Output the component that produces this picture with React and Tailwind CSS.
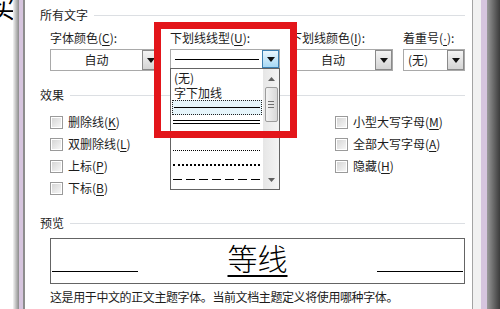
import React from "react";

const font = "font-['Noto_Sans_CJK_SC','Noto_Sans',sans-serif]";

function Arrow({ active }) {
  return (
    <div
      className={
        "flex w-[17px] items-center justify-center self-stretch border " +
        (active
          ? "border-[#3c7fb1] bg-gradient-to-b from-[#eaf6fd] to-[#a7d9f5]"
          : "border-[#8a8a8a] bg-gradient-to-b from-[#f4f4f4] to-[#d4d4d4]")
      }
    >
      <svg width="8" height="5" viewBox="0 0 8 5">
        <path d="M0 0H8L4 5Z" fill="#111" />
      </svg>
    </div>
  );
}

function Select({ children, center }) {
  return (
    <div className="flex h-[22px] border border-[#a9a9a9] bg-white">
      <div
        className={
          "flex flex-1 items-center text-[12px] " +
          (center ? "justify-center" : "pl-[4px]")
        }
      >
        {children}
      </div>
      <Arrow />
    </div>
  );
}

function Heading({ children }) {
  return (
    <div className="flex h-[16px] items-center">
      <span className="text-[12px] leading-none">{children}</span>
      <div className="ml-[6px] h-px flex-1 bg-[#dcdfe3]" />
    </div>
  );
}

function Check({ children }) {
  return (
    <div className="flex h-[22px] items-center">
      <div className="h-[13px] w-[13px] border border-[#9a9a9a] p-px">
        <div className="h-full w-full bg-gradient-to-br from-[#d6d6d6] to-[#f6f6f6]" />
      </div>
      <span className="ml-[5px] text-[12px]">{children}</span>
    </div>
  );
}

function Key({ k }) {
  return <span className="underline underline-offset-2">{k}</span>;
}

function LineItem({ kind }) {
  if (kind === "solid") return <div className="h-px w-full bg-black" />;
  if (kind === "double")
    return (
      <div className="w-full">
        <div className="h-px bg-black" />
        <div className="mt-[2px] h-px bg-black" />
      </div>
    );
  if (kind === "thick") return <div className="h-[2px] w-full bg-black" />;
  if (kind === "dotted") return <div className="w-full border-t border-dotted border-black" />;
  if (kind === "heavy") return <div className="w-full border-t-2 border-dotted border-black" />;
  return (
    <div className="h-px w-full bg-[repeating-linear-gradient(90deg,#000_0_9px,transparent_9px_13px)]" />
  );
}

function Dropdown() {
  const lines = ["double", "thick", "dotted", "heavy", "dashed"];
  return (
    <div className="absolute left-0 top-[19px] flex h-[122px] w-[110px] border border-[#646464] bg-white">
      <div className="flex-1 pt-[2px] text-[12px] leading-[14px]">
        <div className="flex h-[14.5px] items-center pl-[3px]">(无)</div>
        <div className="flex h-[14.5px] items-center pl-[3px]">字下加线</div>
        <div className="mx-px flex h-[14.5px] items-center border border-dotted border-[#222] bg-[#e6f5fb] px-[1px]">
          <LineItem kind="solid" />
        </div>
        {lines.map((k) => (
          <div key={k} className="flex h-[14.5px] items-center pl-[2px] pr-[3px]">
            <LineItem kind={k} />
          </div>
        ))}
      </div>
      <div className="flex w-[16px] flex-col items-center bg-gradient-to-r from-[#e6e6e6] to-[#f4f4f4]">
        <svg className="mt-[8px]" width="7" height="4" viewBox="0 0 7 4">
          <path d="M0 4L3.5 0L7 4Z" fill="#606060" />
        </svg>
        <div className="mt-[6px] flex h-[35px] w-[13px] flex-col items-center justify-center gap-[2px] rounded-[2px] border border-[#9c9c9c] bg-gradient-to-r from-[#f3f3f3] to-[#d8d8d8]">
          <div className="h-px w-[6px] bg-[#707070]" />
          <div className="h-px w-[6px] bg-[#707070]" />
          <div className="h-px w-[6px] bg-[#707070]" />
        </div>
        <svg className="mt-[56px]" width="7" height="4" viewBox="0 0 7 4">
          <path d="M0 0H7L3.5 4Z" fill="#606060" />
        </svg>
      </div>
    </div>
  );
}

export default function App() {
  return (
    <div className={"flex h-[309px] w-[500px] overflow-hidden bg-white text-[#1c1c1c] " + font}>
      <div className="w-[13px] overflow-hidden">
        <div className="-ml-[10px] -mt-[5px] text-[25px] leading-none text-black">买</div>
      </div>
      <div className="w-[6px] bg-gradient-to-r from-[#f4f4f4] to-[#8c8c8c]" />
      <div className="w-[4px] bg-[#d6c5de]" />
      <div className="w-[2px] bg-[#8d8d8d]" />

      <div className="relative flex-1 pl-[15px] pr-[7px] pt-[7px]">
        <Heading>所有文字</Heading>

        <div className="ml-[10px] mt-[7px] grid grid-cols-[110px_110px_103px_62px] gap-x-[10px]">
          <div className="h-[16px] text-[12px] leading-[16px]">
            字体颜色(<Key k="C" />):
          </div>
          <div className="h-[16px] text-[12px] leading-[16px]">
            下划线线型(<Key k="U" />):
          </div>
          <div className="h-[16px] text-[12px] leading-[16px]">
            下划线颜色(<Key k="I" />):
          </div>
          <div className="h-[16px] text-[12px] leading-[16px]">
            着重号(
            <span className="font-['Liberation_Sans',sans-serif] underline underline-offset-2">·</span>
            ):
          </div>

          <div className="mt-[3px]">
            <Select center>自动</Select>
          </div>
          <div className="relative mt-[3px]">
            <div className="flex h-[20px] border border-[#a9a9a9] bg-white">
              <div className="flex flex-1 items-center pl-[4px] pr-[3px]">
                <div className="h-px w-full bg-black" />
              </div>
              <Arrow active />
            </div>
            <Dropdown />
          </div>
          <div className="mt-[3px]">
            <Select center>自动</Select>
          </div>
          <div className="mt-[3px]">
            <Select>(无)</Select>
          </div>
        </div>

        <div className="mt-[16px]">
          <Heading>效果</Heading>
        </div>
        <div className="ml-[10px] mt-[8px] flex">
          <div className="w-[285px]">
            <Check>
              删除线(<Key k="K" />)
            </Check>
            <Check>
              双删除线(<Key k="L" />)
            </Check>
            <Check>
              上标(<Key k="P" />)
            </Check>
            <Check>
              下标(<Key k="B" />)
            </Check>
          </div>
          <div>
            <Check>
              小型大写字母(<Key k="M" />)
            </Check>
            <Check>
              全部大写字母(<Key k="A" />)
            </Check>
            <Check>
              隐藏(<Key k="H" />)
            </Check>
          </div>
        </div>

        <div className="mt-[16px]">
          <Heading>预览</Heading>
        </div>
        <div className="ml-[10px] mt-[7px] flex h-[46px] items-start justify-between border border-[#646464] px-px">
          <div className="mt-[32px] h-px w-[86px] bg-black" />
          <div className="text-[30px] font-light leading-[36px] text-black underline decoration-2 underline-offset-[5px]">
            等线
          </div>
          <div className="mt-[32px] h-px w-[86px] bg-black" />
        </div>
        <div className="ml-[10px] mt-[6px] text-[12px] leading-[14px] tracking-[-0.4px]">
          这是用于中文的正文主题字体。当前文档主题定义将使用哪种字体。
        </div>

        <div className="absolute left-[129px] top-[22px] h-[116px] w-[143px] border-[7px] border-[#e3151a]" />
      </div>

      <div className="w-px bg-[#a3a3a3]" />
      <div className="w-[8px] bg-[#f1f1f1]" />
      <div className="w-[6px] bg-[#d6c5de]" />
      <div className="w-[13px] bg-gradient-to-r from-[#9a9a9a] to-[#3c3c3c]" />
    </div>
  );
}
